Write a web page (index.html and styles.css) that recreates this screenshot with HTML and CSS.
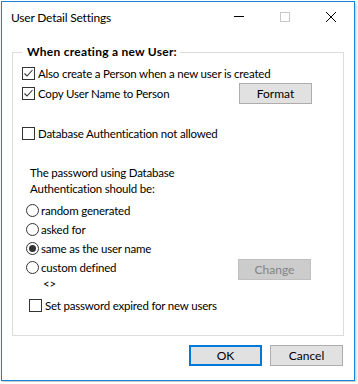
FILE: index.html
```html
<!DOCTYPE html>
<html lang="en">
<head>
    <meta charset="UTF-8">
    <title>User Detail Settings</title>
    <link rel="stylesheet" href="styles.css">
</head>
<body>
    <div class="window">
        <div class="titlebar">
            <span class="title">User Detail Settings</span>
            <div class="controls">
                <span class="ctl"><svg width="10" height="10"><line x1="0" y1="4.5" x2="10" y2="4.5" stroke="#000"/></svg></span>
                <span class="ctl"><svg width="10" height="10"><rect x="0.5" y="0.5" width="9" height="9" fill="none" stroke="#c8c8c8"/></svg></span>
                <span class="ctl"><svg width="10" height="10"><path d="M0 0L10 10M10 0L0 10" stroke="#000"/></svg></span>
            </div>
        </div>

        <div class="content">
            <fieldset class="group">
                <legend>When creating a new User:</legend>

                <div class="row">
                    <span class="box"><svg width="11" height="11"><polyline points="1.5,5.5 4,8 9.5,2" fill="none" stroke="#333" stroke-width="1.1"/></svg></span>
                    <span>Also create a Person when a new user is created</span>
                </div>
                <div class="row row-btn">
                    <span class="box"><svg width="11" height="11"><polyline points="1.5,5.5 4,8 9.5,2" fill="none" stroke="#333" stroke-width="1.1"/></svg></span>
                    <span>Copy User Name to Person</span>
                    <button class="btn side">Format</button>
                </div>
                <div class="row row-db">
                    <span class="box"></span>
                    <span>Database Authentication not allowed</span>
                </div>

                <p class="note">The password using Database<br>Authentication should be:</p>

                <div class="radios">
                    <div class="row radio-row"><span class="radio"></span><span>random generated</span></div>
                    <div class="row radio-row"><span class="radio"></span><span>asked for</span></div>
                    <div class="row radio-row"><span class="radio on"></span><span>same as the user name</span></div>
                    <div class="custom">
                        <div>
                            <div class="row radio-row"><span class="radio"></span><span>custom defined</span></div>
                            <div class="value">&lt;&gt;</div>
                        </div>
                        <button class="btn side" disabled>Change</button>
                    </div>
                </div>

                <div class="row row-exp">
                    <span class="box"></span>
                    <span>Set password expired for new users</span>
                </div>
            </fieldset>

            <div class="actions">
                <button class="btn default">OK</button>
                <button class="btn">Cancel</button>
            </div>
        </div>
    </div>
</body>
</html>
```

FILE: styles.css
```css
/* Dialog frame */
body {
    margin: 0;
    background: #fff;
    font-family: Lato, "Noto Sans", sans-serif;
    font-size: 11.5px;
    letter-spacing: -0.2px;
    color: #000;
}
.window {
    width: 352px;
    height: 378px;
    margin: 1px;
    border: 1px solid #1883d7;
    background: #fff;
    box-shadow: 1px 2px 3px rgba(0, 0, 0, 0.25);
}
.titlebar {
    height: 30px;
    display: flex;
    align-items: center;
}
.title {
    flex: 1;
    padding-left: 9px;
    font-size: 12px;
}
.controls {
    display: flex;
    height: 100%;
}
.ctl {
    width: 46px;
    display: flex;
    align-items: center;
    justify-content: center;
}
.ctl svg {
    display: block;
}

/* Group box */
.content {
    padding: 0 10px;
}
.group {
    margin: 12px 0 0;
    padding: 3px 0 20px 9px;
    border: 1px solid #dcdcdc;
    min-width: 0;
}
.group legend {
    padding: 0 3px 0 5px;
    font-weight: bold;
    font-size: 12px;
    letter-spacing: 0.25px;
    line-height: 16px;
}
.row {
    display: flex;
    align-items: center;
    height: 20px;
}
.row-btn {
    height: 21px;
}
.row-db {
    margin-top: 19px;
}
.box {
    width: 11px;
    height: 11px;
    border: 1px solid #333;
    margin-right: 3px;
    flex: none;
}
.box svg {
    display: block;
}
.radio {
    width: 11px;
    height: 11px;
    border: 1px solid #333;
    border-radius: 50%;
    margin-right: 2px;
    flex: none;
    display: flex;
    align-items: center;
    justify-content: center;
}
.radio.on::after {
    content: "";
    width: 7px;
    height: 7px;
    border-radius: 50%;
    background: #333;
}
.note {
    margin: 22px 0 0 8px;
    line-height: 16px;
}
.radios {
    margin: 4px 0 0 4px;
}
.radio-row {
    height: 19px;
}
.custom {
    display: flex;
    align-items: flex-start;
}
.value {
    padding-left: 17px;
    line-height: 14px;
}
.row-exp {
    margin: 4px 0 0 7px;
}

/* Buttons */
.btn {
    width: 73px;
    height: 21px;
    padding: 0;
    font: inherit;
    font-size: 12px;
    color: #000;
    background: #e1e1e1;
    border: 1px solid #adadad;
}
.side {
    margin-left: auto;
    margin-right: 31px;
}
.custom .side {
    margin-top: 1px;
    margin-right: 32px;
}
.btn:disabled {
    background: #cccccc;
    border-color: #bfbfbf;
    color: #838383;
}
.btn.default {
    border: 2px solid #0078d7;
}
.actions {
    display: flex;
    justify-content: flex-end;
    gap: 8px;
    margin-top: 9px;
    padding-right: 1px;
}
```
